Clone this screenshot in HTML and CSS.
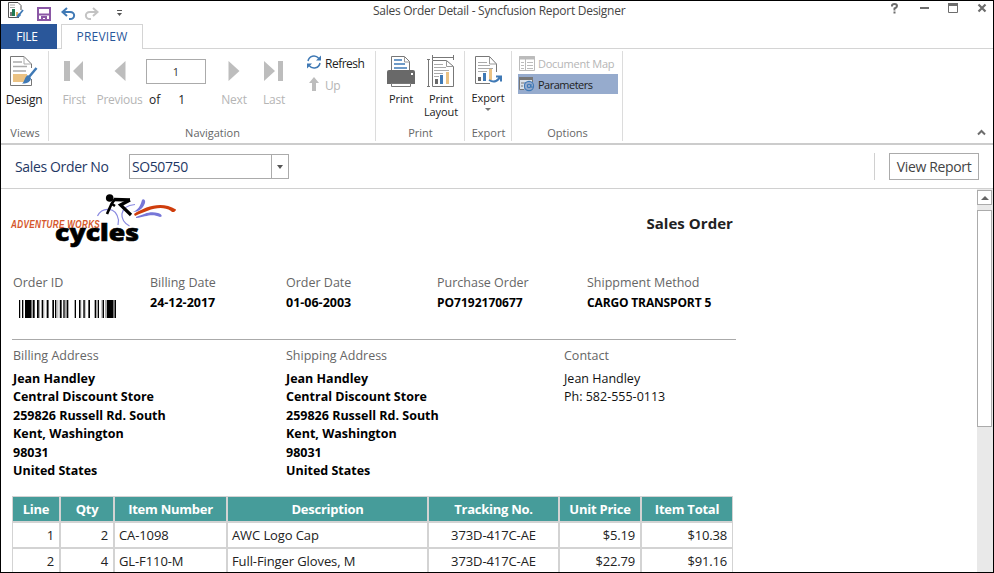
FILE: index.html
```html
<!DOCTYPE html>
<html lang="en">
<head>
<meta charset="utf-8">
<title>Sales Order Detail - Syncfusion Report Designer</title>
<link rel="stylesheet" href="styles.css">
</head>
<body>
<div class="window">
  <header class="titlebar">
    <div class="quick">
      <svg width="130" height="23" viewBox="1 1 130 23" fill="none">
        <path d="M8.500 2.500H18L21 5.500V10M8.500 2.500V17.500H19" stroke="#555"/>
        <path d="M10 5h5M10 7.500h5" stroke="#aaa"/>
        <path d="M10 12h2v4h-2z" fill="#777"/><path d="M12 9h3v7h-3z" fill="#217a53"/><path d="M16 12h2v4h-2z" fill="#e3b667"/>
        <path d="M23 10l-4 5" stroke="#3f79b5" stroke-width="1.800"/><path d="M19 13l2 2c-1 2-3 2.500-5 2.500 1-1 1-3 3-4.500z" fill="#3f79b5"/>
        <path d="M38 8h12v12H38z" stroke="#8a57a5" stroke-width="2"/><path d="M38 14.500h12" stroke="#8a57a5" stroke-width="2"/><path d="M41 16h6v4h-2v-2h-2v2h-2z" fill="#8a57a5"/>
        <path d="M67 8L62.500 12 67 16M63 12h7c6 0 5 7 0 7h-1" stroke="#3f79b5" stroke-width="2"/>
        <path d="M93 8l4.500 4L93 16M97 12h-7c-6 0-5 7 0 7h1" stroke="#c3c3c3" stroke-width="2"/>
        <path d="M117 10.500h5" stroke="#555"/><path d="M117 13h5l-2.500 3z" fill="#555"/>
      </svg>
    </div>
    <div class="title">Sales Order Detail - Syncfusion Report Designer</div>
    <svg class="winbtns" width="110" height="23" viewBox="883 1 110 23" fill="none" stroke="#6d6d6d">
      <path d="M892 6.500V5.500Q892 4 894.500 4T897 6Q897 7.500 894.500 8.500V10.500M894.500 11.500v2" stroke-width="2"/>
      <path d="M920 8h9" stroke-width="2"/>
      <path d="M948.500 3.500h9v9h-9z"/><path d="M948 4.500h10" stroke-width="3"/>
      <path d="M978.500 4.500l7 7M985.500 4.500l-7 7" stroke-width="2.200"/>
    </svg>
  </header>

  <nav class="tabs"><div class="tab file">FILE</div><div class="tab preview">PREVIEW</div></nav>

  <section class="ribbon">
    <div class="group views">
      <div class="body">
        <div class="btn design">
          <svg width="32" height="38" viewBox="8 54 32 38" fill="none">
            <path d="M10.500 56.500H24L31.500 64V68M31.500 79V85.500H10.500V56.500" stroke="#777"/><path d="M24 56.500V64h7" stroke="#aaa"/>
            <path d="M13 62h9M13 66.500h14M13 71h13" stroke="#aaa" stroke-width="1.500"/>
            <path d="M13 74h14v8H13z" fill="#ebc283"/>
            <path d="M36.500 68L29 77" stroke="#3f79b5" stroke-width="2.500"/><path d="M28 75l3 3c0 4-5 6-9 5.500 3-2 2-6 6-8.500z" fill="#3f79b5"/>
          </svg>
          <span>Design</span>
        </div>
      </div>
      <div class="label">Views</div>
    </div>
    <div class="group navigation">
      <div class="body">
        <div class="btn off first"><svg width="20" height="38" viewBox="0 0 20 38"><path d="M0 7h6v20H0zM19 7v20L9 17z"/></svg><span>First</span></div>
        <div class="btn off prev"><svg width="12" height="38" viewBox="0 0 12 38"><path d="M11.500 7v20L.5 17z"/></svg><span>Previous</span></div>
        <div class="pager"><div class="pagebox">1</div><div class="count"><span>of</span><span>1</span></div></div>
        <div class="btn off next"><svg width="12" height="38" viewBox="0 0 12 38"><path d="M.5 7v20l11-10z"/></svg><span>Next</span></div>
        <div class="btn off last"><svg width="20" height="38" viewBox="0 0 20 38"><path d="M14 7h5v20h-5zM0 7v20l11-10z"/></svg><span>Last</span></div>
        <div class="stack">
          <div class="small"><svg width="16" height="18" viewBox="306 54 16 18" fill="none"><path d="M308 61C309 56 315 54 319 58.500M320 63C319 68 313 70 309 65.500" stroke="#3f79b5" stroke-width="1.500"/><path d="M321 55.500v5h-5zM307 68.500v-5h5z" fill="#3f79b5"/></svg><span>Refresh</span></div>
          <div class="small off up"><svg width="16" height="18" viewBox="0 0 16 18"><path d="M8 1l5 6h-3v8H6V7H3z"/></svg><span>Up</span></div>
        </div>
      </div>
      <div class="label">Navigation</div>
    </div>
    <div class="group print">
      <div class="body">
        <div class="btn tight pr">
          <svg width="30" height="36" viewBox="386 54 30 36" fill="none">
            <path d="M391.500 71V56.500h13l5 5V71" stroke="#777"/><path d="M404.500 57v5h5" stroke="#999"/>
            <path d="M394 60h8M394 64h11M394 68h13" stroke="#3f79b5" stroke-width="1.600"/>
            <path d="M387 72q0-2 2-2h24q2 0 2 2v12h-28z" fill="#696969"/><path d="M411 73h2v2h-2z" fill="#fff"/><path d="M391.500 83.500h19v3h-19z" fill="#fff" stroke="#777"/>
          </svg><span>Print</span>
        </div>
        <div class="btn tight pl">
          <svg width="30" height="36" viewBox="426 54 30 36" fill="none">
            <path d="M432 57.500h22M432.500 55v5M453.500 55v5M428.500 59v27M427 59.500h3M427 86.500h3" stroke="#777"/>
            <path d="M432.500 60.500h14l7 6V86.500h-21z" stroke="#777"/><path d="M446.500 60.500v6h7" stroke="#999"/>
            <path d="M434 64.500h9M434 67.500h12M434 70.500h15M434 73.500h9M434 76.500h5" stroke="#aaa"/>
            <path d="M435 79h3v5h-3z" fill="#696969"/><path d="M440 75h3v9h-3z" fill="#3f79b5"/><path d="M446 72h3v12h-3z" fill="#ebc283"/>
          </svg><span>Print</span><span class="second">Layout</span>
        </div>
      </div>
      <div class="label">Print</div>
    </div>
    <div class="group export">
      <div class="body">
        <div class="btn tight ex">
          <svg width="30" height="35" viewBox="474 54 30 35" fill="none">
            <path d="M496.500 72V64l-7-7.500h-14V83.500H490" stroke="#777"/><path d="M489.500 57v7h7" stroke="#999"/>
            <path d="M478 62.500h9M478 65.500h12M478 68.500h15M478 71.500h9" stroke="#aaa"/>
            <path d="M478 77h3v4h-3z" fill="#696969"/><path d="M483 73h3v8h-3z" fill="#3f79b5"/><path d="M489 69h3v11h-3z" fill="#ebc283"/>
            <path d="M489 80c5 3 10 1 11-4M496 76.500h5v5" stroke="#3f79b5" stroke-width="2"/>
          </svg><span>Export</span><i class="caret"></i>
        </div>
      </div>
      <div class="label">Export</div>
    </div>
    <div class="group options">
      <div class="body">
        <div class="opt off"><svg width="17" height="17" viewBox="518 54 17 17" fill="none"><path d="M519.500 55.500h15v14h-15z" stroke="#bbb"/><path d="M519 57h16" stroke="#bbb" stroke-width="3"/><path d="M525.500 58v11M521 61.500h3M521 64.500h3M521 67.500h3M527 61.500h6M527 64.500h6M527 67.500h6" stroke="#bbb"/></svg><span>Document Map</span></div>
        <div class="opt on"><svg width="17" height="20" viewBox="518 74 17 20" fill="none"><path d="M519.500 77.500h13v12h-13z" fill="#d9e0ea" stroke="#777"/><path d="M519 78.500h14" stroke="#777" stroke-width="3"/><path d="M521 83h3M521 86h2" stroke="#777"/><path d="M524 82h9v9h-9z" fill="#96abcd"/><circle cx="529" cy="86" r="4.600" stroke="#3f79b5" stroke-width="1.100"/><circle cx="529" cy="86" r="1.700" stroke="#3f79b5" stroke-width="1.100"/><path d="M531 84v3q2 1 2.500-1" stroke="#3f79b5"/></svg><span>Parameters</span></div>
      </div>
      <div class="label">Options</div>
    </div>
    <svg class="collapse" width="9" height="7" viewBox="0 0 9 7" fill="none"><path d="M1 5.500L4.500 2 8 5.500" stroke="#6d6d6d" stroke-width="2"/></svg>
  </section>

  <section class="params">
    <label class="plabel">Sales Order No</label>
    <div class="combo"><span>SO50750</span><div class="drop"><i></i></div></div>
    <div class="divider"></div>
    <button class="view">View Report</button>
  </section>

  <main class="viewer">
    <article class="page">
      <div class="head">
        <svg class="logo" width="170" height="62" viewBox="8 189 170 62" fill="none">
          <path d="M97.500 216C102 207 116 206 118.500 220L118 225M135 204.500C118 206 119 221 129.500 226" stroke="#8a8ae0" stroke-width="1.200"/>
          <circle cx="109.700" cy="198" r="3.800" fill="#000"/>
          <path d="M114 199.500L130 200" stroke="#000" stroke-width="3.400"/>
          <path d="M130 200L120.500 205 131 215" stroke="#000" stroke-width="3.200"/>
          <path d="M115 199L111.500 204 107 214M112 204l3 2" stroke="#000" stroke-width="2.600"/>
          <path d="M134 214C146 206 162 201 176 209.500 176 212 172 213 171 211 160 204 147 211 135 216z" fill="#cf3d0c"/>
          <path d="M133 212C140 209 141 203 142 200 143 198 146 200 145 203 143 209 138 212 133 212zM136 217C145 214 149 211 158 213 162 214 163 217 160 217 151 213 146 217 136 218z" fill="#7777d8"/>
          <text class="adv" transform="translate(11 228) scale(.74 1)" textLength="120">ADVENTURE WORKS</text>
          <text class="cyc" x="55" y="241" textLength="84" lengthAdjust="spacingAndGlyphs">cycles</text>
        </svg>
        <h1>Sales Order</h1>
      </div>
      <div class="fields">
        <div><h2>Order ID</h2>
          <svg class="barcode" width="98" height="18" viewBox="27 0 294 54" preserveAspectRatio="none"><path fill="#aaa" d="M28 0h4v54h-4zM63 0h9v54h-9zM84 0h6v54h-6zM97 0h6v54h-6zM114 0h3v54h-3zM142 0h3v54h-3zM148 0h3v54h-3zM165 0h4v54h-4zM192 0h4v54h-4zM210 0h4v54h-4zM222 0h5v54h-5zM252 0h4v54h-4zM274 0h4v54h-4zM285 0h9v54h-9zM308 0h10v54h-10z"/><path fill="#000" d="M27 0h3v54h-3zM36 0h4v54h-4zM45 0h19v54H45zM69 0h5v54h-5zM81 0h5v54h-5zM95 0h4v54h-4zM110 0h5v54h-5zM127 0h5v54h-5zM135 0h4v54h-4zM150 0h5v54h-5zM160 0h4v54h-4zM170 0h5v54h-5zM195 0h3v54h-3zM207 0h4v54h-4zM220 0h4v54h-4zM235 0h5v54h-5zM255 0h4v54h-4zM263 0h4v54h-4zM278 0h4v54h-4zM291 0h19v54h-19zM314 0h4v54h-4z"/></svg></div>
        <div><h2>Billing Date</h2><b>24-12-2017</b></div>
        <div><h2>Order Date</h2><b>01-06-2003</b></div>
        <div><h2>Purchase Order</h2><b class="po">PO7192170677</b></div>
        <div><h2>Shippment Method</h2><b class="cargo">CARGO TRANSPORT 5</b></div>
      </div>
      <div class="addresses">
        <div><h2>Billing Address</h2><p class="bold">Jean Handley<br>Central Discount Store<br>259826 Russell Rd. South<br>Kent, Washington<br>98031<br>United States</p></div>
        <div><h2>Shipping Address</h2><p class="bold">Jean Handley<br>Central Discount Store<br>259826 Russell Rd. South<br>Kent, Washington<br>98031<br>United States</p></div>
        <div><h2>Contact</h2><p>Jean Handley<br>Ph: 582-555-0113</p></div>
      </div>
      <div class="grid">
        <div class="th">Line</div><div class="th">Qty</div><div class="th">Item Number</div><div class="th">Description</div><div class="th">Tracking No.</div><div class="th">Unit Price</div><div class="th">Item Total</div>
        <div class="num">1</div><div class="num">2</div><div>CA-1098</div><div>AWC Logo Cap</div><div class="mid">373D-417C-AE</div><div class="num">$5.19</div><div class="num">$10.38</div>
        <div class="num">2</div><div class="num">4</div><div>GL-F110-M</div><div>Full-Finger Gloves, M</div><div class="mid">373D-417C-AE</div><div class="num">$22.79</div><div class="num">$91.16</div>
      </div>
    </article>
    <div class="scroll"><div class="arrow"><i></i></div><div class="thumb"></div></div>
  </main>
</div>
</body>
</html>
```
FILE: styles.css
```css
* { box-sizing: border-box; }
body { margin: 0; font-family: "Open Sans", "Noto Sans", sans-serif; font-size: 12px; color: #333; background: #fff; }
h1, h2, p { margin: 0; font-weight: 400; }
svg { display: block; flex: none; }
.window { width: 994px; height: 573px; border: 1px solid #000; display: flex; flex-direction: column; overflow: hidden; white-space: nowrap; }

.titlebar { height: 23px; display: flex; flex: none; }
.quick { width: 372px; }
.title { flex: 1; line-height: 20px; letter-spacing: -.27px; color: #444; }
.tabs { height: 25px; flex: none; display: flex; border-bottom: 1px solid #d4d4d4; }
.tab { height: 25px; line-height: 25px; text-align: center; font-size: 12px; }
.file { width: 56px; background: #2a579a; color: #fff; height: 25px; padding-right: 4px; letter-spacing: -.2px; }
.preview { width: 82px; margin-left: 4px; border: 1px solid #d4d4d4; border-bottom: 0; background: #fff; color: #2a579a; line-height: 24px; letter-spacing: .2px; }

.ribbon { height: 96px; flex: none; display: flex; border-bottom: 2px solid #ccc; padding-top: 2px; position: relative; }
.group { height: 90px; border-right: 1px solid #dcdcdc; display: flex; flex-direction: column; }
.body { height: 74px; display: flex; }
.label { text-align: center; color: #666; font-size: 11px; line-height: 16px; padding-left: 1px; }
.views { width: 48px; }
.navigation { width: 327px; }
.print { width: 89px; }
.export { width: 47px; }
.options { width: 111px; }
.options .body { flex-direction: column; padding: 2px 4px 0 6px; }
.btn { display: flex; flex-direction: column; align-items: center; padding-top: 3px; }
.btn span { line-height: 16px; font-size: 12px; letter-spacing: -.25px; color: #222; }
.off svg { fill: #bdbdbd; }
.opt.off svg { fill: none; }
.btn.off span, .off span { color: #b5b5b5; }
.design { width: 46px; }
.first { width: 50px; }
.prev { width: 41px; }
.next { width: 40px; margin-left: 8px; }
.last { width: 40px; }
.pager { width: 60px; margin-left: 6px; padding-top: 8px; }
.pagebox { height: 25px; border: 1px solid #ababab; text-align: center; line-height: 24px; font-size: 11px; }
.count { display: flex; gap: 18px; padding-left: 3px; margin-top: 8px; line-height: 16px; font-size: 12px; color: #222; }
.stack { margin-left: 12px; padding-top: 3px; display: flex; flex-direction: column; gap: 4px; }
.small { display: flex; align-items: center; gap: 3px; height: 18px; color: #222; letter-spacing: -.5px; }
.btn.tight span { font-size: 11px; line-height: 13px; text-align: center; letter-spacing: -.1px; padding-top: 2px; }
.btn.tight .second { line-height: 12px; padding-top: 1px; }
.pr { width: 50px; }
.pl { width: 30px; }
.ex { width: 46px; }
.ex svg { margin-left: 1px; }
.caret { border: 3px solid transparent; border-top-color: #777; border-bottom: 0; margin-top: 4px; }
.opt { display: flex; align-items: center; height: 20px; gap: 3px; margin-bottom: 1px; font-size: 11px; color: #222; letter-spacing: -.25px; }
.on { background: #96abcd; letter-spacing: -.5px; }
.collapse { position: absolute; right: 7px; bottom: 7px; }

.params { height: 44px; flex: none; display: flex; align-items: center; border-bottom: 1px solid #d0d0d0; padding-left: 14px; }
.plabel { width: 114px; color: #1f3864; font-size: 14px; letter-spacing: -.35px; }
.combo { width: 160px; height: 25px; border: 1px solid #ababab; display: flex; justify-content: space-between; padding-left: 2px; line-height: 24px; font-size: 14px; color: #1f3864; letter-spacing: -.4px; }
.drop { width: 17px; border-left: 1px solid #ababab; display: flex; justify-content: center; align-items: center; }
.drop i { border: 3px solid transparent; border-top: 4px solid #555; border-bottom: 0; }
.divider { width: 1px; height: 27px; background: #d0d0d0; margin-left: 585px; }
.view { width: 90px; height: 27px; margin-left: 14px; border: 1px solid #ababab; background: #fff; font: 14px/26px "Open Sans", sans-serif; color: #444; padding: 0; letter-spacing: -.35px; }

.viewer { flex: 1; display: flex; min-height: 0; overflow: hidden; }
.page { flex: 1; padding-left: 11px; overflow: hidden; }
.head { display: flex; justify-content: space-between; width: 721px; height: 86px; }
.logo { margin-left: -4px; }
.adv { font: italic 700 11px "Liberation Sans", sans-serif; fill: #d5562b; }
.cyc { font: 800 22px "Open Sans", sans-serif; fill: #000; stroke: #000; stroke-width: .6px; }
h1 { font-size: 15px; font-weight: 700; line-height: 20px; margin-top: 24px; color: #222; letter-spacing: .05px; }
h2 { font-size: 12.500px; line-height: 16px; color: #666; }
.fields { display: grid; grid-template-columns: 137px 136px 151px 150px 150px; width: 724px; height: 65px; padding-left: 1px; }
.fields b { display: block; color: #000; line-height: 16px; margin-top: 4px; font-size: 12.500px; }
.fields .po { font-size: 12px; }
.fields .cargo { font-size: 12px; letter-spacing: -.15px; }
.barcode { margin: 9px 0 0 6px; }
.addresses { display: grid; grid-template-columns: 273px 278px 150px; width: 724px; height: 156px; border-top: 1px solid #aaa; padding: 8px 0 0 1px; margin-top: -1px; }
.addresses p { color: #111; font-size: 12.500px; line-height: 18.400px; margin-top: 6px; }
.addresses .bold { font-weight: 700; color: #000; }
.grid { display: grid; grid-template-columns: 46px 52px 111px 199px 129px 80px 90px; grid-auto-rows: 24px; gap: 2px; padding: 1px; width: 721px; background: #d3d3d3; margin-top: 1px; }
.grid div { background: #fff; color: #222; font-size: 13px; line-height: 25px; padding: 0 4px; letter-spacing: -.1px; }
.grid .th { background: #469c9a; color: #fff; font-weight: 700; text-align: center; letter-spacing: -.25px; line-height: 24px; }
.grid .num { text-align: right; padding-right: 5px; letter-spacing: -.2px; }
.grid .mid { text-align: center; }

.scroll { width: 16px; background: #e9e9e9; padding-top: 1px; }
.arrow { width: 15px; height: 15px; border: 1px solid #ababab; background: #fff; display: flex; align-items: center; justify-content: center; }
.arrow i { border: 4px solid transparent; border-bottom-color: #666; border-top: 0; }
.thumb { width: 15px; height: 217px; margin-top: 5px; border: 1px solid #ababab; background: #fff; }
```
